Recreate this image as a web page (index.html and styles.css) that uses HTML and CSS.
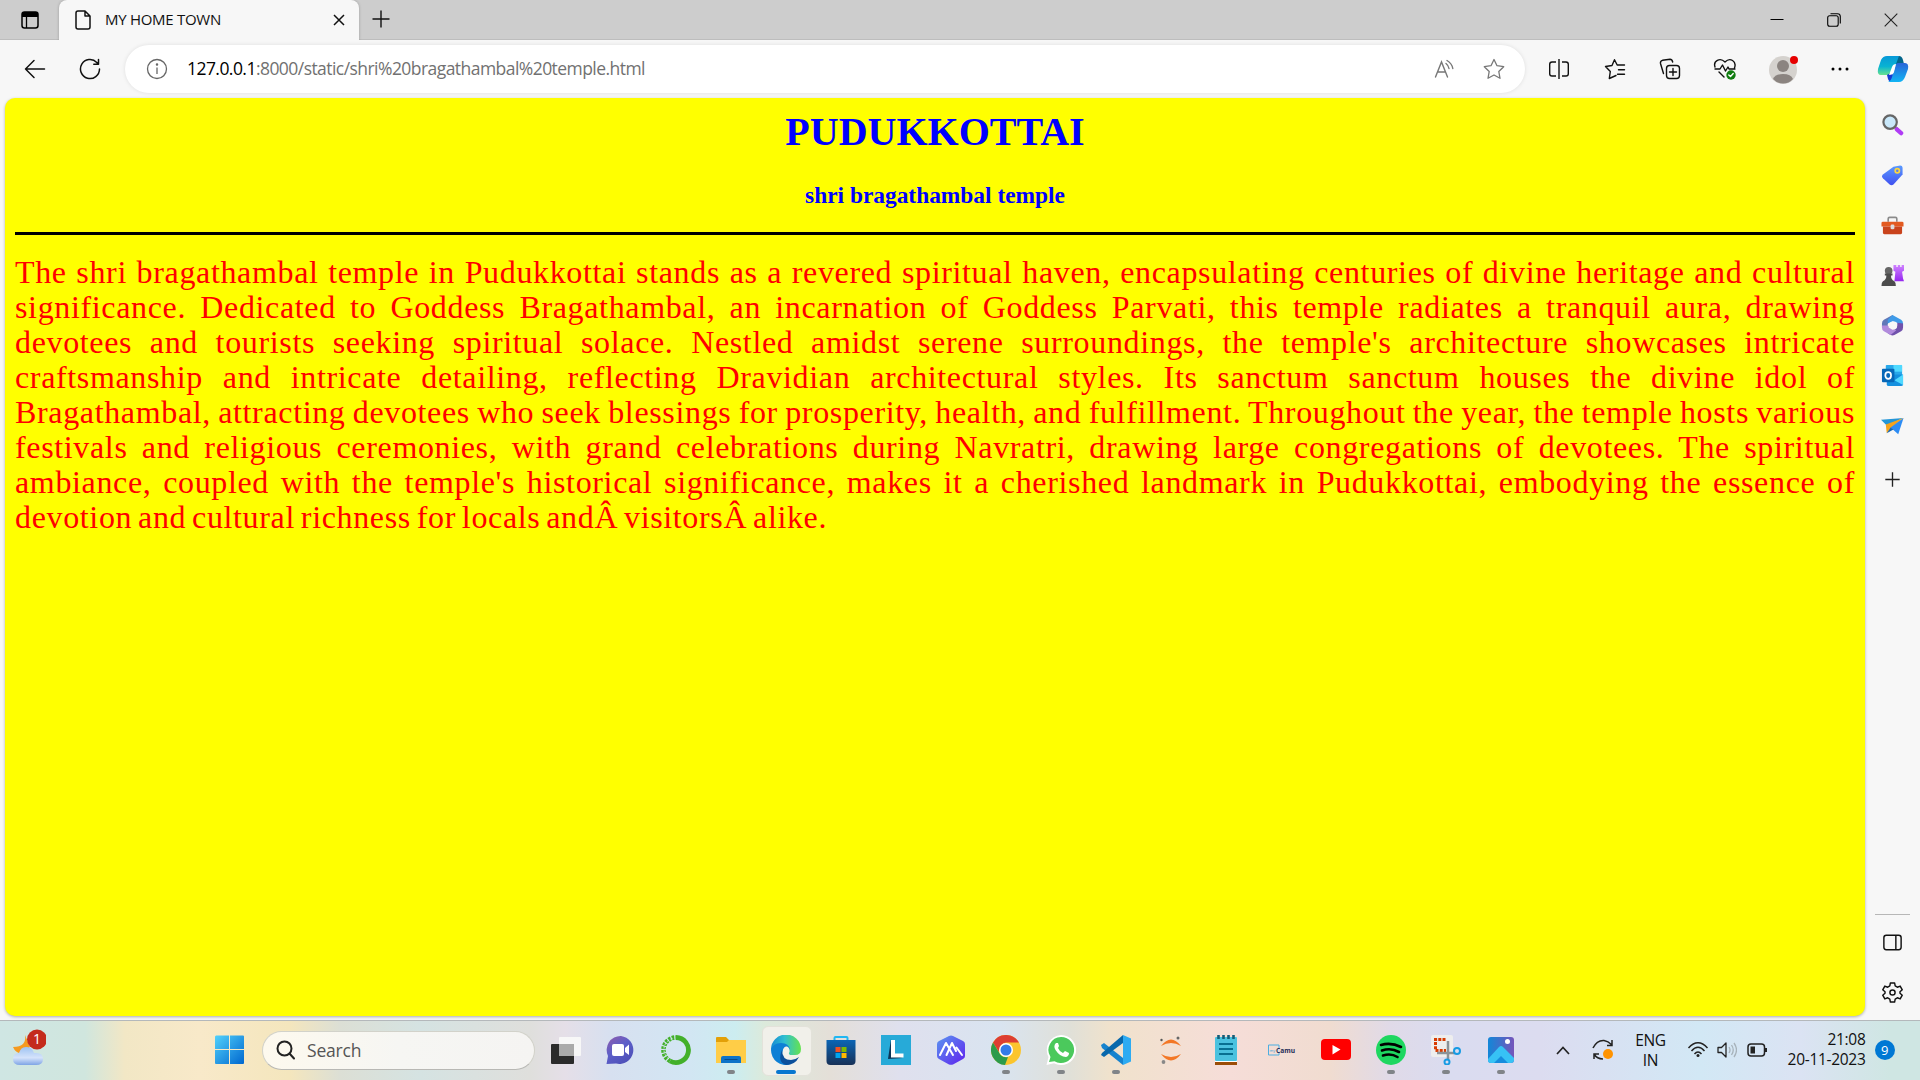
FILE: index.html
```html
<!DOCTYPE html>
<html lang="en">
<head>
<meta charset="utf-8">
<title>MY HOME TOWN</title>
<link rel="stylesheet" href="styles.css">
</head>
<body>
<header class="titlebar">
  <div class="workspace"><svg width="18" height="18" viewBox="0 0 18 18"><rect x="1" y="1" width="16" height="16" rx="2.5" fill="none" stroke="#000" stroke-width="1.5"/><path d="M1 6V3Q1 1 3 1H15Q17 1 17 3V6Z"/><path d="M5.5 6V17" stroke="#000" stroke-width="1.3"/></svg></div>
  <div class="tab">
    <svg width="16" height="20" viewBox="0 0 16 20" fill="none" stroke="#111" stroke-width="1.5" stroke-linejoin="round"><path d="M3 1H10L15 6V17Q15 19 13 19H3Q1 19 1 17V3Q1 1 3 1ZM10 1V6H15"/></svg>
    <span class="tab-title">MY HOME TOWN</span>
    <svg class="tab-close" width="12" height="12" viewBox="0 0 12 12" stroke="#111" stroke-width="1.5"><path d="M1 1L11 11M11 1L1 11"/></svg>
  </div>
  <svg class="newtab" width="18" height="18" viewBox="0 0 18 18" stroke="#111" stroke-width="1.4"><path d="M9 .5V17.5M.5 9H17.5"/></svg>
  <div class="window-buttons">
    <svg width="14" height="14" viewBox="0 0 14 14" stroke="#000" stroke-width="1"><path d="M.5 6.5H13.5"/></svg>
    <svg width="14" height="14" viewBox="0 0 14 14" fill="none" stroke="#000" stroke-width="1.1"><rect x=".7" y="2.7" width="10.5" height="10.5" rx="2"/><path d="M3.5 .7H10.5Q13.3 .7 13.3 3.5V10.5"/></svg>
    <svg width="14" height="14" viewBox="0 0 14 14" stroke="#222" stroke-width="1.1"><path d="M.7 .7L13.3 13.3M13.3 .7L.7 13.3"/></svg>
  </div>
</header>

<nav class="toolbar">
  <div class="nav-buttons">
    <svg width="22" height="20" viewBox="0 0 22 20" fill="none" stroke="#111" stroke-width="1.5" stroke-linecap="round" stroke-linejoin="round"><path d="M20.500 10H1.500M10 1.500L1.500 10L10 18.500"/></svg>
    <svg width="22" height="22" viewBox="0 0 22 22" fill="none" stroke="#111" stroke-width="1.5" stroke-linecap="round" stroke-linejoin="round"><path d="M20.500 11A9.500 9.500 0 1 1 17.800 4.400L19.300 6M19.500 1.500V6.200H14.800"/></svg>
  </div>
  <div class="address">
    <svg width="22" height="22" viewBox="0 0 22 22" fill="none" stroke="#666" stroke-width="1.3"><circle cx="11" cy="11" r="9.500"/><path d="M11 9.500V16"/><circle cx="11" cy="6.600" r=".6" fill="#666"/></svg>
    <span class="url"><b>127.0.0.1</b>:8000/static/shri%20bragathambal%20temple.html</span>
    <svg class="read" width="22" height="20" viewBox="0 0 22 20" fill="none" stroke="#777" stroke-width="1.4" stroke-linecap="round"><path d="M1.500 18L7.500 3L13.500 18M3.500 13H11.500M12 4.500Q14.500 6.500 15 9.500M13 1.500Q18 4.500 18.800 9.500"/></svg>
    <svg class="star" width="22" height="22" viewBox="0 0 22 22" fill="none" stroke="#777" stroke-width="1.3" stroke-linejoin="round"><path d="M11 1.500L14 7.700L20.700 8.700L15.800 13.500L17 20.300L11 17L5 20.300L6.200 13.500L1.300 8.700L8 7.700Z"/></svg>
  </div>
  <div class="tools">
    <svg width="22" height="22" viewBox="0 0 22 22" fill="none" stroke="#111" stroke-width="1.4"><path d="M8 4H4Q1.700 4 1.700 6.300V15.700Q1.700 18 4 18H8M14 4H18Q20.300 4 20.300 6.300V15.700Q20.300 18 18 18H14M11 1V21"/></svg>
    <svg width="22" height="22" viewBox="0 0 22 22" fill="none" stroke="#111" stroke-width="1.4" stroke-linejoin="round" stroke-linecap="round"><path d="M12 17.500L5.300 20.500L6.300 13.500L1.500 8.500L8 7.500L10.500 1.700L13.200 7H20.500M14.500 11.700H20.500M13.500 16.300H20.500"/></svg>
    <svg width="22" height="22" viewBox="0 0 22 22" fill="none" stroke="#111" stroke-width="1.4" stroke-linecap="round"><rect x="7.500" y="7.500" width="13" height="13" rx="3"/><path d="M14 10.500V17.500M10.500 14H17.500M4.500 15.500L1.500 5.500Q1 3 3.500 2.300L11 1.300Q13 1.300 13.700 4"/></svg>
    <svg width="24" height="22" viewBox="0 0 24 22" fill="none" stroke="#111" stroke-width="1.4" stroke-linejoin="round" stroke-linecap="round"><path d="M2 9C0 3 7 -1 12 4C17-1 24 3 21.500 10M2 11H7L9.500 7L12.500 13L15 9L16 11H22M6 14L11 19"/><circle cx="18" cy="17" r="4.700" fill="#107c10" stroke="none"/><path d="M15.800 17L17.500 18.500L20.200 15.600" stroke="#fff"/></svg>
    <svg class="avatar" width="30" height="30" viewBox="0 0 30 30"><circle cx="14" cy="16" r="14" fill="#d5d2ce"/><circle cx="14" cy="12" r="6" fill="#8b8480"/><path d="M4 25Q6 20 14 20T24 25Q20 29.500 14 29.500T4 25Z" fill="#8b8480"/><circle cx="25" cy="6" r="4" fill="#e60000"/></svg>
    <svg width="18" height="6" viewBox="0 0 18 6"><circle cx="2" cy="3" r="1.500"/><circle cx="9" cy="3" r="1.500"/><circle cx="16" cy="3" r="1.500"/></svg>
    <svg width="32" height="28" viewBox="0 0 32 28"><defs><linearGradient id="cpa" x2="0" y2="1"><stop stop-color="#0898d8"/><stop offset=".55" stop-color="#08b3d2"/><stop offset="1" stop-color="#68e28e"/></linearGradient><linearGradient id="cpb" x2="0" y2="1"><stop stop-color="#2864d8"/><stop offset="1" stop-color="#12b5f4"/></linearGradient></defs><path d="M18 1H22Q25 1 26 5L27 9L19 9L15 17Z" fill="#03658b"/><path d="M10 1H22L16 17Q15 20 11 20H4Q0 20 1 14L4 5Q6 1 10 1Z" fill="url(#cpa)"/><path d="M10 20L15 17L18 27H15Q12 27 11 24Z" fill="#173bd2"/><path d="M21 8H28Q32 8 31 14L28 22Q26 27 22 27H11Q14 26 15 22L18 12Q19 8 21 8Z" fill="url(#cpb)"/><path d="M15 12Q16 9 19 9L17 17Q16 20 12 20Z" fill="#fff"/></svg>
  </div>
</nav>

<div class="main">
  <main class="page">
    <h1>PUDUKKOTTAI</h1>
    <h3>shri bragathambal temple</h3>
    <hr>
    <p>
      <span>The shri bragathambal temple in Pudukkottai stands as a revered spiritual haven, encapsulating centuries of divine heritage and cultural</span>
      <span>significance. Dedicated to Goddess Bragathambal, an incarnation of Goddess Parvati, this temple radiates a tranquil aura, drawing</span>
      <span>devotees and tourists seeking spiritual solace. Nestled amidst serene surroundings, the temple's architecture showcases intricate</span>
      <span>craftsmanship and intricate detailing, reflecting Dravidian architectural styles. Its sanctum sanctum houses the divine idol of</span>
      <span>Bragathambal, attracting devotees who seek blessings for prosperity, health, and fulfillment. Throughout the year, the temple hosts various</span>
      <span>festivals and religious ceremonies, with grand celebrations during Navratri, drawing large congregations of devotees. The spiritual</span>
      <span>ambiance, coupled with the temple's historical significance, makes it a cherished landmark in Pudukkottai, embodying the essence of</span>
      <span class="last">devotion and cultural richness for locals andÂ visitorsÂ alike.</span>
    </p>
  </main>
  <aside class="sidebar">
    <div class="apps">
      <svg viewBox="0 0 24 24"><path d="M15 15L17.500 17.500" stroke="#777" stroke-width="3"/><path d="M16.500 17L21 21" stroke="#b03cf5" stroke-width="4.500" stroke-linecap="round"/><circle cx="9.500" cy="9.500" r="7" fill="#c9e8fa" stroke="#666" stroke-width="2.300"/></svg>
      <svg viewBox="0 0 24 24"><defs><linearGradient id="tag" x2="0" y2="1"><stop stop-color="#5b9bff"/><stop offset="1" stop-color="#4050f0"/></linearGradient></defs><path d="M13 4L20 2.500Q22.500 2.500 22.500 5V12L13 22.500Q11 24 9 22.500L2 16Q0 14 2 12Z" fill="url(#tag)"/><circle cx="17" cy="8" r="2.200" fill="#5b7fe8" stroke="#fcd53f" stroke-width="1.800"/></svg>
      <svg viewBox="0 0 24 24"><path d="M7.500 8V5Q7.500 3.500 9 3.500H15Q16.500 3.500 16.500 5V8" fill="none" stroke="#8b8b8b" stroke-width="1.700"/><path d="M2 8H22Q23.500 8 23.500 9.500V13H.5V9.500Q.5 8 2 8Z" fill="#e35a20"/><path d="M2 13H22V19.500Q22 21 20.500 21H3.500Q2 21 2 19.500Z" fill="#c9431c"/><rect x="10" y="11" width="4" height="5" rx="1.500" fill="#ddd"/></svg>
      <svg viewBox="0 0 24 24"><defs><linearGradient id="rook" x2="0" y2="1"><stop stop-color="#cf83ff"/><stop offset="1" stop-color="#9526ef"/></linearGradient></defs><path d="M13 1H16V3H17.500V1H20V3H21.500V1H24V7L22 8L23 15L24 18H14L15 8L13 7Z" fill="url(#rook)"/><circle cx="8" cy="7" r="4" fill="#666"/><path d="M4 10H12V12H10.500Q10 16 14 18Q15.500 19 15.500 23H.5Q.5 19 2 18Q6 16 5.500 12H4Z" fill="#4c4c4c"/></svg>
      <svg viewBox="0 0 24 24"><path d="M12 1L3 6Q1 7 1 10V14L7 18V11Q7 9 9 8L15 5Z" fill="#6078b8"/><path d="M12 1L21 6Q23 7 23 10V13L15 8Q13 7 11 8L7 10V6Z" fill="#3f9be8"/><path d="M23 10V14Q23 17 21 18L14 22Q12 23 10 22L7 20L15 16Q17 15 17 12V9Z" fill="#7152ac"/><path d="M1 12V14Q1 17 3 18L10 22L16 17L12 16L7 12Z" fill="#b18bdc"/><path d="M12 7.500L16 10V14L12 16.500L8 14V10Z" fill="#f7f7f7"/></svg>
      <svg viewBox="0 0 24 24"><rect x="5" y="1" width="17" height="14" rx="1" fill="#28a8ea"/><path d="M13 1H22V8H13Z" fill="#50d9ff"/><path d="M6 11H23V21Q23 23 21 23H8Q6 23 6 21Z" fill="#1490df"/><path d="M14 17L23 11V22Z" fill="#50d9ff"/><rect x="1" y="5" width="13" height="14" rx="1" fill="#0768b8"/><ellipse cx="7.500" cy="12" rx="3" ry="3.500" fill="none" stroke="#fff" stroke-width="1.800"/></svg>
      <svg viewBox="0 0 24 24"><path d="M23.500 3L0 5L6 11Z" fill="#2496d7"/><path d="M23.500 3L5 10L6 19L10 14Z" fill="#f5a31b"/><path d="M23.500 3L10 13L18 20Z" fill="#2d8cf4"/><path d="M6 19L10 13L13 15Z" fill="#1768b3"/></svg>
      <svg class="plus" viewBox="0 0 24 24"><path d="M12 4.500V19.500M4.500 12H19.500" stroke="#222" stroke-width="1.400"/></svg>
    </div>
    <div class="side-bottom">
      <svg viewBox="0 0 24 24" fill="none" stroke="#111" stroke-width="1.500"><rect x="3" y="4.500" width="18" height="15" rx="2.500"/><path d="M15.500 4.500V19.500"/></svg>
      <svg viewBox="0 0 24 24" fill="none" stroke="#111" stroke-width="1.500" stroke-linejoin="round"><path d="M9.800 2H14.200L14.800 5.200L17 6.500L20 5.300L22.200 9.200L19.800 11.200V12.800L22.200 14.800L20 18.700L17 17.500L14.800 18.800L14.200 22H9.800L9.200 18.800L7 17.500L4 18.700L1.800 14.800L4.200 12.800V11.200L1.800 9.200L4 5.300L7 6.500L9.200 5.200Z"/><circle cx="12" cy="12" r="2.700"/></svg>
    </div>
  </aside>
</div>

<footer class="taskbar">
  <div class="weather"><svg width="34" height="38" viewBox="0 0 34 38"><defs><linearGradient id="cloud" x2="0" y2="1"><stop stop-color="#9dc2f2"/><stop offset=".6" stop-color="#d5e3fb"/><stop offset="1" stop-color="#7ea4e5"/></linearGradient></defs><path d="M13 6Q15 18 1 18Q4 25 10 24L18 18Z" fill="#f59a20"/><path d="M8 36Q1 36 1 30Q1 24 7 24Q9 17 15 18Q20 18 22 24Q31 23 31 30Q31 36 24 36Z" fill="url(#cloud)"/><circle cx="25" cy="10.500" r="10" fill="#c42b1c"/></svg><span class="count">1</span></div>
  <div class="start"><svg width="30" height="30" viewBox="0 0 30 30"><defs><linearGradient id="win" gradientUnits="userSpaceOnUse" x1="0" y1="0" x2="29" y2="29"><stop stop-color="#52d2fb"/><stop offset="1" stop-color="#0067cf"/></linearGradient></defs><path d="M1 .5H14V14H0V1.500ZM15 .5H28Q29 .5 29 1.500V14H15ZM0 15H14V29H1Q0 29 0 28ZM15 15H29V28Q29 29 28 29H15Z" fill="url(#win)"/></svg></div>
  <div class="search"><svg width="20" height="20" viewBox="0 0 20 20" fill="none" stroke="#222" stroke-width="2" stroke-linecap="round"><circle cx="8.500" cy="8.500" r="7"/><path d="M13.500 13.500L18 18.500"/></svg><span>Search</span></div>
  <div class="pinned">
    <div class="app"><svg viewBox="0 0 30 30"><rect x="0" y="9" width="23" height="20" rx="1" fill="#2b2b2b"/><rect x="8" y="2" width="22" height="19" rx="1" fill="#f7f7f7"/><path d="M8 9H23V21H8Z" fill="#aaa"/></svg></div>
    <div class="app"><svg viewBox="0 0 30 30"><defs><linearGradient id="chat" x2=".7" y2="1"><stop stop-color="#925caa"/><stop offset=".5" stop-color="#5d5fc9"/><stop offset="1" stop-color="#4e50b8"/></linearGradient></defs><path d="M15 1A14 14 0 1 1 10 28.500L.5 29L2 21A14 14 0 0 1 15 1Z" fill="url(#chat)"/><rect x="6" y="9" width="12" height="12" rx="2" fill="#fff"/><path d="M19 13L23 9.500V20L19 17Z" fill="#fff"/></svg></div>
    <div class="app"><svg viewBox="0 0 30 30" fill="none" stroke="#43b02a"><path d="M15 2.500A12.500 12.500 0 1 1 9 26" stroke-width="4.800"/><path d="M9 26A12.500 12.500 0 0 1 15 2.500" stroke-width="4.500" stroke-dasharray="2.500 1.100"/><path d="M8 24A11.500 11.500 0 0 1 14 3" stroke="#d7e5f1" stroke-width="1" stroke-dasharray="2 2"/></svg></div>
    <div class="app running"><svg viewBox="0 0 30 30"><path d="M0 3Q0 2 1 2H10L13 5H29Q30 5 30 6V12H0Z" fill="#e3a008"/><path d="M0 7H11L13 5H30V28H0Z" fill="#ffcd47"/><path d="M5 28V23Q5 21 7 21H23Q25 21 25 23V28Z" fill="#0c73c8"/><path d="M8.500 24.500H21.500" stroke="#064b8b"/></svg></div>
    <div class="app running active"><svg viewBox="0 0 30 30"><defs><linearGradient id="edge"><stop stop-color="#1489d4"/><stop offset=".45" stop-color="#30bfd0"/><stop offset="1" stop-color="#65e34e"/></linearGradient></defs><path d="M0 15A15 15 0 0 1 30 14Q30 20 24 20H19Q17 19 18.500 17Q19 11 13 11Z" fill="url(#edge)"/><path d="M0 15Q2 8 10 8Q18 8 19 15Q15 9 12 15Q8 26 19 29.500A15 15 0 0 1 0 15Z" fill="#0d7fd5"/><path d="M11 15Q11 25 20 25Q24 25 28 22Q24 30 15 30Q6 27 11 15Z" fill="#0b509c"/><path d="M12 15Q13 11 16 11.500Q19 13 18 16Q16 19 20 21Q12 21 12 15Z" fill="#f2f1eb"/></svg></div>
    <div class="app"><svg viewBox="0 0 30 30"><defs><linearGradient id="store" x2="0" y2="1"><stop stop-color="#0b65b5"/><stop offset="1" stop-color="#183157"/></linearGradient></defs><path d="M8.500 7V3Q8.500 2 9.500 2H20.500Q21.500 2 21.500 3V7" fill="none" stroke="#20b7f2" stroke-width="2"/><path d="M.5 5H29.500V26Q29.500 30 25.500 30H4.500Q.5 30 .5 26Z" fill="url(#store)"/><path d="M9.500 12H14.500V17H9.500Z" fill="#f25022"/><path d="M15.500 12H20.500V17H15.500Z" fill="#7fba00"/><path d="M9.500 18H14.500V23H9.500Z" fill="#00a4ef"/><path d="M15.500 18H20.500V23H15.500Z" fill="#ffb900"/></svg></div>
    <div class="app"><svg viewBox="0 0 30 30"><path d="M0 0H30V30H0Z" fill="#27aad8"/><path d="M10 4L7 24L22 23L12 20Z" fill="#0c3557"/><path d="M12 5V20.500H22.500" fill="none" stroke="#fff" stroke-width="4"/></svg></div>
    <div class="app"><svg viewBox="0 0 30 30"><defs><linearGradient id="hex" x2="1" y2="1"><stop stop-color="#5b96f0"/><stop offset="1" stop-color="#5f22ee"/></linearGradient></defs><path d="M13 1Q15 0 17 1L27 6Q29 7 29 9V21Q29 23 27 24L17 29.500Q15 30 13 29.500L3 24Q1 23 1 21V9Q1 7 3 6Z" fill="url(#hex)"/><path d="M4 20L10 8L17 20M10.500 20L16 8L20 16M20.500 12.500L26 20" fill="none" stroke="#fff" stroke-width="2" stroke-linecap="round" stroke-linejoin="round"/></svg></div>
    <div class="app running"><svg viewBox="0 0 30 30"><circle cx="15" cy="15" r="15" fill="#fbc52d"/><path d="M2 7.500A15 15 0 0 1 28 7.500H15Q9 8 8 17Z" fill="#dd3e32"/><path d="M2 7.500L9 19Q12 23 17 22L14 30A15 15 0 0 1 2 7.500Z" fill="#2c9b4b"/><circle cx="15" cy="15" r="7" fill="#fff"/><circle cx="15" cy="15" r="5.500" fill="#347be8"/></svg></div>
    <div class="app running"><svg viewBox="0 0 30 30"><path d="M15 0A15 15 0 1 1 8 28.200L.5 30L2.500 22A15 15 0 0 1 15 0Z" fill="#fff"/><path d="M15 2A13 13 0 1 1 8.500 26.200L3 27L4.500 22A13 13 0 0 1 15 2Z" fill="#4bc95c"/><path d="M10 8Q7 11 9.500 15Q14 22 20 22Q23 21 23 18L19 16L17 18Q13 16 12 13L13 11L12 8Z" fill="#fff"/></svg></div>
    <div class="app running"><svg viewBox="0 0 30 30"><path d="M0 10L3 8L22 23V30L1 13Z" fill="#1683ce"/><path d="M0 20L3 22L22 8V0L1 18Z" fill="#0768ac"/><path d="M22 0L30 3.500V26.500L22 30Z" fill="#2dabf2"/></svg></div>
    <div class="app"><svg viewBox="0 0 30 30"><path d="M5 11Q15-2 25 11Q15 5 5 11ZM5 19Q15 32 25 19Q15 25 5 19Z" fill="#f37726"/><circle cx="22" cy="3" r="1.500" fill="#666"/><circle cx="5.500" cy="5" r="1.200" fill="#555"/><circle cx="7.500" cy="27" r="1.900" fill="#888"/></svg></div>
    <div class="app"><svg viewBox="0 0 30 30"><path d="M4 26H26V30H4Z" fill="#9b4d07"/><path d="M4 25H26V27H4Z" fill="#fff"/><rect x="4" y="2" width="22" height="24" rx="1" fill="#4bc2df"/><path d="M8 9H22M8 14H22M8 19H22" stroke="#087091" stroke-width="1.800"/><path d="M7.500 0V4M12.500 0V4M17.500 0V4M22.500 0V4" stroke="#155d78" stroke-width="2.600"/></svg></div>
    <div class="app"><svg class="camu" viewBox="0 0 30 30"><path d="M13 13V10H2.500V20H13V18" fill="none" stroke="#4daee1" stroke-width="1"/><text x="3.500" y="16.500" font-size="4" fill="#389ed8">my</text><text x="10" y="17.500" font-size="6.600" font-weight="bold" fill="#242c57">Camu</text></svg></div>
    <div class="app"><svg viewBox="0 0 30 30"><rect y="4" width="30" height="21" rx="4" fill="#f00"/><path d="M11.500 10L19.500 14.500L11.500 19.500Z" fill="#fff"/></svg></div>
    <div class="app running"><svg viewBox="0 0 30 30"><circle cx="15" cy="15" r="15" fill="#1ed760"/><path d="M5 10Q15 7 25 12M6 15.500Q15 12.500 23 17M7 20.500Q15 18 21.500 22" fill="none" stroke="#000" stroke-width="2.600" stroke-linecap="round"/></svg></div>
    <div class="app running"><svg viewBox="0 0 30 30"><rect width="22" height="22" rx="2" fill="#eee"/><path d="M14.500 4.500H4.500V15.500H15" fill="none" stroke="#d83b01" stroke-width="3" stroke-dasharray="3 1.200"/><path d="M17 6V25M6 18H24" stroke="#8b9297" stroke-width="2.500"/><circle cx="26" cy="16" r="3" fill="none" stroke="#169be3" stroke-width="2"/><circle cx="16" cy="27" r="2.500" fill="none" stroke="#169be3" stroke-width="2"/></svg></div>
    <div class="app running"><svg viewBox="0 0 30 30"><defs><linearGradient id="photo"><stop stop-color="#1287d8"/><stop offset="1" stop-color="#7655ba"/></linearGradient></defs><rect x="2" y="2" width="26" height="26" rx="3" fill="url(#photo)"/><path d="M2 24L13 12Q15 10 17 12L28 23V25Q28 28 25 28H5Q2 28 2 25Z" fill="#37c2f5"/><path d="M8 28L15 21L22 28Z" fill="#168cdd"/><circle cx="21.500" cy="6.500" r="2.500" fill="#fff"/></svg></div>
  </div>
  <div class="tray">
    <svg class="chev" width="14" height="9" viewBox="0 0 14 9" fill="none" stroke="#222" stroke-width="1.700"><path d="M1 8L7 1.500L13 8"/></svg>
    <svg class="sync" width="22" height="22" viewBox="0 0 22 22" fill="none" stroke="#222" stroke-width="1.500"><path d="M1 9Q5 1 12 1.500Q16 2 20 6M20 1V6.500H15M7 15H2V20M2 15Q5 20 11 20"/><circle cx="16" cy="15" r="5" fill="#ff9300" stroke="none"/></svg>
    <div class="lang">ENG<br>IN</div>
    <svg class="wifi" width="22" height="18" viewBox="0 0 22 18" fill="none" stroke="#222" stroke-width="1.500"><path d="M1.500 7Q11-3.500 20.500 7M4.500 10Q11 2.500 17.500 10M7.500 13Q11 9 14.500 13"/><circle cx="11" cy="14.500" r="1.500" fill="#222" stroke="none"/></svg>
    <svg class="vol" width="20" height="18" viewBox="0 0 20 18" fill="none" stroke="#222" stroke-width="1.300" stroke-linejoin="round"><path d="M1 6.500H4.500L9 2V16L4.500 11.500H1Z"/><path d="M12 6Q14 9 12 12M14.500 4Q18 9 14.500 14M17 2Q22 9 17 16" stroke="#a7b2ba"/></svg>
    <svg class="bat" width="21" height="14" viewBox="0 0 21 14"><rect x="1" y="1" width="16.500" height="12" rx="3" fill="none" stroke="#222" stroke-width="1.500"/><path d="M3.500 3.500H8V10.500H3.500Z" fill="#222"/><path d="M18 5H20V9H18Z" fill="#222"/></svg>
    <div class="clock">21:08<br>20-11-2023</div>
    <div class="notice">9</div>
  </div>
</footer>
</body>
</html>
```
FILE: styles.css
```css
* { box-sizing: border-box; }
body { margin: 0; width: 1920px; height: 1080px; overflow: hidden; display: flex; flex-direction: column; background: #f7f7f7; font-family: "Open Sans", "Noto Sans", sans-serif; color: #111; }
svg { flex: none; display: block; }

.titlebar { height: 40px; flex: none; display: flex; background: #cdcdcd; border-bottom: 1px solid #bdbdbd; }
.workspace { width: 59px; padding: 11px 0 0 21px; }
.tab { width: 300px; height: 40px; display: flex; align-items: center; padding: 0 14px 0 16px; background: #f7f7f7; border-radius: 8px 8px 0 0; box-shadow: 0 0 3px rgba(0,0,0,.25); clip-path: inset(0 -4px 0 -4px); }
.tab-title { margin-left: 14px; padding-bottom: 2px; font-size: 15px; letter-spacing: -.28px; white-space: nowrap; }
.tab-close { margin-left: auto; }
.newtab { margin: 10px 0 0 13px; }
.window-buttons { margin-left: auto; display: flex; gap: 43px; padding: 13px 22px 0 0; }

.toolbar { height: 58px; flex: none; display: flex; align-items: center; }
.nav-buttons { width: 125px; display: flex; gap: 33px; padding-left: 24px; align-items: center; }
.address { width: 1400px; height: 48px; border-radius: 24px; background: #fff; box-shadow: 0 0 4px rgba(0,0,0,.1); display: flex; align-items: center; padding: 0 20px 0 21px; }
.url { margin-left: 19px; padding-bottom: 2px; font-size: 17.5px; letter-spacing: -.55px; color: #717171; white-space: nowrap; }
.url b { font-weight: 400; color: #000; }
.read { margin-left: auto; }
.star { margin-left: 27px; }
.tools { display: flex; align-items: center; padding-left: 23px; gap: 33px; }
.tools .avatar { margin: 0 -1px; }
.tools svg:nth-child(2), .tools svg:nth-child(3) { position: relative; left: 1px; }
.tools svg:last-child { margin-left: -5px; }

.main { height: 922px; flex: none; display: flex; padding-left: 5px; }
.page { width: 1860px; height: 918px; background: #ff0; border-radius: 10px; padding: 11px 10px 0; box-shadow: 0 1px 3px rgba(0,0,0,.3); font-family: "Liberation Serif", serif; }
h1 { margin: 0 0 27px; font-size: 40px; line-height: 46px; text-align: center; color: #00f; }
h3 { margin: 0 0 23px; font-size: 23.4px; line-height: 27px; text-align: center; color: #00f; }
hr { margin: 0 0 20px; height: 3px; border: 0; background: #000; }
p { margin: 0; font-family: Georgia, "Liberation Serif", serif; font-size: 32px; line-height: 35px; color: #f00; letter-spacing: .65px; word-spacing: -2.8px; }
p span { display: block; text-align: justify; text-align-last: justify; white-space: nowrap; }
p .last { text-align-last: left; }

.sidebar { width: 55px; display: flex; flex-direction: column; justify-content: space-between; align-items: center; padding: 15px 0 16px 0; }
.sidebar svg { width: 23px; height: 23px; }
.apps { display: flex; flex-direction: column; gap: 27.300px; }
.apps .plus { margin-top: 3px; }
.side-bottom { width: 35px; display: flex; flex-direction: column; align-items: center; gap: 27px; padding-top: 16px; border-top: 1px solid #b7b7b7; }

.taskbar { height: 60px; flex: none; display: flex; align-items: center; box-shadow: inset 0 1px #b4b8bb; background: linear-gradient(90deg, #cfe6e3 0, #d0e6de 85px, #f2e7c5 125px, #f8e9c9 200px, #f4e6bd 290px, #dcdfd5 340px, #d5e3e2 420px, #dfdfdc 530px, #e5dfe8 565px, #d7e0f0 610px, #d2e6f3 690px, #ccedf0 735px, #dceadb 765px, #e4dfd8 830px, #dfe0ee 900px, #d9e4f0 1000px, #e0e0d8 1070px, #f0e2cc 1110px, #f6ddd8 1230px, #f0dcd0 1330px, #e0dae8 1390px, #dadcf0 1450px, #dcdcf0 1540px, #d2e8f5 1700px, #dbe3f3 1800px, #cfe6e3 1890px); }
.weather { position: relative; width: 214px; padding: 0 0 5px 12px; }
.count { position: absolute; left: 27px; top: 0; width: 20px; text-align: center; font-size: 14px; line-height: 20px; color: #fff; }
.start { width: 48px; }
.start svg { margin-left: 1px; }
.search { width: 273px; height: 39px; border-radius: 20px; border: 1px solid #d2d2ca; border-bottom-color: #b8b8b4; background: linear-gradient(90deg, #fdf9ee, #f6f6f3 50%, #f5f4f2); display: flex; align-items: center; padding-left: 13px; gap: 11px; font-size: 17.500px; letter-spacing: -.2px; color: #555; }
.search span { padding-bottom: 1px; }
.pinned { display: flex; margin-left: 3.500px; }
.app { width: 55px; height: 60px; display: flex; align-items: center; justify-content: center; position: relative; }
.app > svg { width: 30px; height: 30px; position: relative; }
.running::after { content: ""; position: absolute; left: 23.500px; top: 50px; width: 8px; height: 4px; border-radius: 2px; background: #808488; }
.active::before { content: ""; position: absolute; left: 3.500px; top: 6px; width: 48px; height: 48px; border-radius: 6px; background: #f1f0ea; border: 1px solid #e3e2da; }
.active::after { left: 17.500px; width: 20px; background: #0877d0; }
.camu { font-family: "Open Sans", sans-serif; }
.tray { flex: 1; display: flex; align-items: center; font-size: 15.500px; line-height: 20px; letter-spacing: -.3px; }
.chev { margin-left: 27px; }
.sync { margin-left: 22px; }
.lang { width: 40px; margin-left: 17px; padding-bottom: 1px; text-align: center; }
.wifi { margin-left: 16px; }
.vol { margin-left: 8px; }
.bat { margin-left: 10px; }
.clock { width: 88px; margin-left: 10px; padding-bottom: 2px; text-align: right; white-space: nowrap; }
.notice { width: 20px; height: 20px; margin-left: 9px; border-radius: 50%; background: #0078d4; color: #fff; text-align: center; font-size: 13px; line-height: 20px; }
```
